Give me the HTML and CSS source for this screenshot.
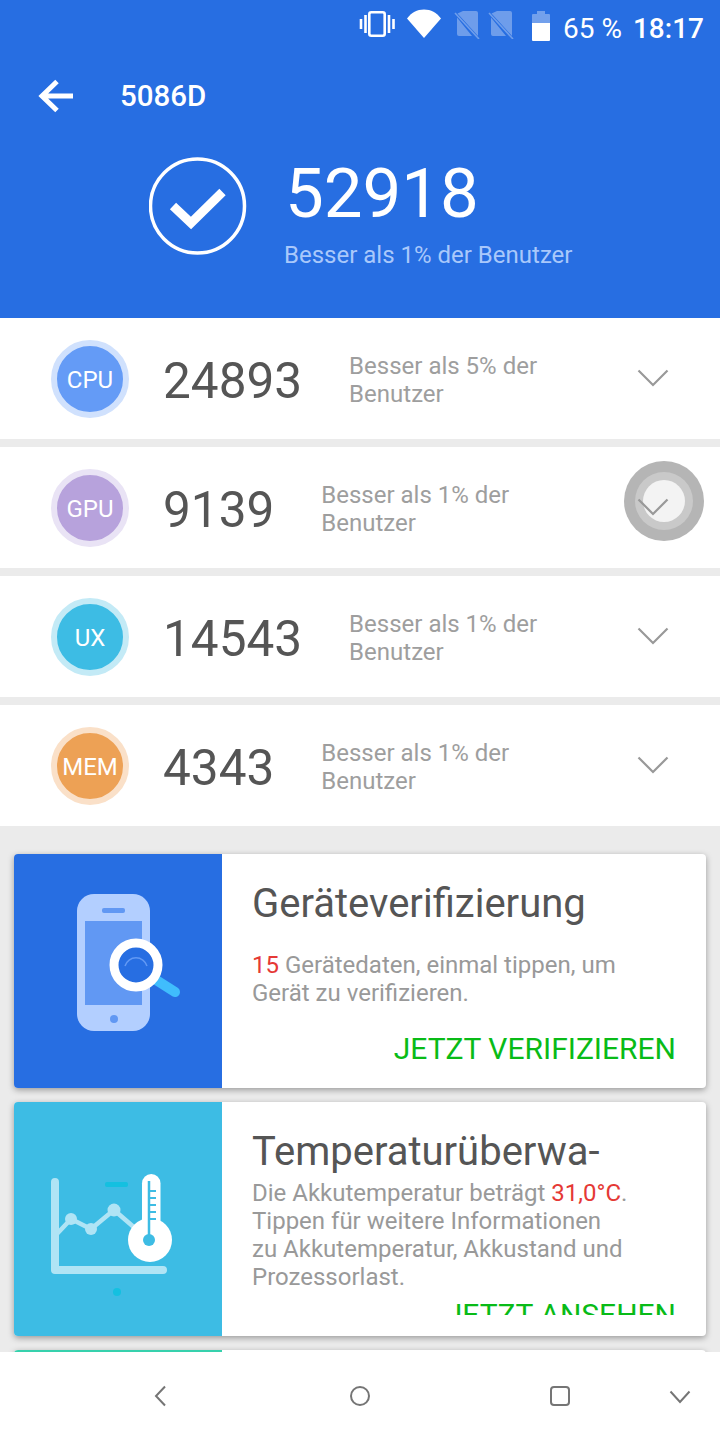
FILE: index.html
```html
<!DOCTYPE html>
<html lang="de">
<head>
    <meta charset="UTF-8">
    <meta name="viewport" content="width=device-width, initial-scale=1.0">
    <title>5086D</title>
    <link rel="stylesheet" href="styles.css">
</head>
<body>
    <div class="screen">
        <header class="header">
            <div class="status-bar">
                <svg class="status-icon" width="38" height="30" viewBox="0 0 38 30">
                    <rect x="11.300" y="3.300" width="15.400" height="23.400" rx="2" fill="none" stroke="#fff" stroke-width="2.600"/>
                    <path d="M7.500 6v18M3 10v10M31 6v18M35.500 10v10" stroke="#fff" stroke-width="2.600" fill="none"/>
                </svg>
                <svg class="status-icon wifi" width="36" height="30" viewBox="0 0 36 30">
                    <path d="M18 29 1 9.500C5.500 3.500 11 .5 18 .5s12.500 3 17 9z" fill="#fff"/>
                </svg>
                <svg class="status-icon sim" width="26" height="30" viewBox="0 0 26 30">
                    <path d="M9 2h13a2 2 0 0 1 2 2v23L3.500 4.500zM3 8.500 18 27H5a2 2 0 0 1-2-2z" fill="#fff" opacity=".33"/>
                    <path d="M1 4 25 30" stroke="#fff" stroke-width="1.600" opacity=".33"/>
                </svg>
                <svg class="status-icon sim" width="26" height="30" viewBox="0 0 26 30">
                    <path d="M9 2h13a2 2 0 0 1 2 2v23L3.500 4.500zM3 8.500 18 27H5a2 2 0 0 1-2-2z" fill="#fff" opacity=".33"/>
                    <path d="M1 4 25 30" stroke="#fff" stroke-width="1.600" opacity=".33"/>
                </svg>
                <svg class="status-icon battery" width="20" height="30" viewBox="0 0 20 30">
                    <path d="M6 0h8v3h4a1 1 0 0 1 1 1v9H1V4a1 1 0 0 1 1-1h4z" fill="#fff" opacity=".35"/>
                    <path d="M1 12h18v17a1 1 0 0 1-1 1H2a1 1 0 0 1-1-1z" fill="#fff"/>
                </svg>
                <span class="battery-text">65 %</span>
                <span class="clock">18:17</span>
            </div>
            <div class="title-bar">
                <svg class="back-arrow" width="36" height="34" viewBox="0 0 36 34">
                    <path d="M35 17H5M19 2.500 4 17l15 14.500" fill="none" stroke="#fff" stroke-width="5"/>
                </svg>
                <span class="device-name">5086D</span>
            </div>
            <div class="total">
                <svg class="total-check" width="98" height="98" viewBox="0 0 98 98">
                    <circle cx="48.500" cy="49" r="47" fill="none" stroke="#fff" stroke-width="3.500"/>
                    <path d="M24 49 42 66 73.500 35" fill="none" stroke="#fff" stroke-width="9"/>
                </svg>
                <div class="total-text">
                    <div class="total-score">52918</div>
                    <div class="total-rank">Besser als 1% der Benutzer</div>
                </div>
            </div>
        </header>

        <main class="content">
            <section class="scores">
                <div class="score-row">
                    <div class="badge cpu"><span>CPU</span></div>
                    <div class="score">24893</div>
                    <div class="rank">Besser als 5% der<br>Benutzer</div>
                    <svg class="chevron" width="32" height="18" viewBox="0 0 32 18"><path d="M1.500 1.500 16 16 30.500 1.500" fill="none" stroke="#999" stroke-width="2.200"/></svg>
                </div>
                <div class="score-row">
                    <div class="badge gpu"><span>GPU</span></div>
                    <div class="score">9139</div>
                    <div class="rank">Besser als 1% der<br>Benutzer</div>
                    <div class="touch-ripple"><div class="touch-mid"><div class="touch-core"></div></div></div>
                    <svg class="chevron" width="32" height="18" viewBox="0 0 32 18"><path d="M1.500 1.500 16 16 30.500 1.500" fill="none" stroke="#999" stroke-width="2.200"/></svg>
                </div>
                <div class="score-row">
                    <div class="badge ux"><span>UX</span></div>
                    <div class="score">14543</div>
                    <div class="rank">Besser als 1% der<br>Benutzer</div>
                    <svg class="chevron" width="32" height="18" viewBox="0 0 32 18"><path d="M1.500 1.500 16 16 30.500 1.500" fill="none" stroke="#999" stroke-width="2.200"/></svg>
                </div>
                <div class="score-row">
                    <div class="badge mem"><span>MEM</span></div>
                    <div class="score">4343</div>
                    <div class="rank">Besser als 1% der<br>Benutzer</div>
                    <svg class="chevron" width="32" height="18" viewBox="0 0 32 18"><path d="M1.500 1.500 16 16 30.500 1.500" fill="none" stroke="#999" stroke-width="2.200"/></svg>
                </div>
            </section>

            <section class="cards">
                <article class="card">
                    <div class="card-art blue">
                        <svg class="art-phone" width="110" height="140" viewBox="0 0 110 140">
                            <rect x="2" y="1" width="73" height="137" rx="17" fill="#b3cfff"/>
                            <rect x="10" y="28" width="57" height="84" fill="#6198f3"/>
                            <rect x="27" y="15" width="23" height="5" rx="2" fill="#6198f3"/>
                            <circle cx="39" cy="126" r="4" fill="#6198f3"/>
                            <path d="M78 85 100 99" stroke="#40bdfd" stroke-width="10" stroke-linecap="round"/>
                            <circle cx="61" cy="72" r="22" fill="#276ee2" stroke="#fff" stroke-width="9"/>
                            <path d="M50 73a11.500 11.500 0 0 1 22 0" fill="none" stroke="#6198f3" stroke-width="1.500"/>
                        </svg>
                    </div>
                    <div class="card-body">
                        <h2 class="card-title">Geräteverifizierung</h2>
                        <p class="card-text first"><span class="red">15</span> Gerätedaten, einmal tippen, um<br>Gerät zu verifizieren.</p>
                        <div class="card-action">JETZT VERIFIZIEREN</div>
                    </div>
                </article>
                <article class="card">
                    <div class="card-art cyan">
                        <svg class="art-thermo" width="124" height="126" viewBox="0 0 124 126">
                            <path d="M5 9v88h108" fill="none" stroke="#b0e4f5" stroke-width="8" stroke-linecap="round" stroke-linejoin="round"/>
                            <path d="M5 63 21 46l20 10 23-19 22 19" fill="none" stroke="#b0e4f5" stroke-width="4.500"/>
                            <circle cx="21" cy="46" r="6" fill="#b0e4f5"/>
                            <circle cx="41" cy="56" r="6" fill="#b0e4f5"/>
                            <circle cx="64" cy="37" r="6.500" fill="#b0e4f5"/>
                            <rect x="55" y="9" width="23" height="5" rx="2" fill="#14c0e0"/>
                            <circle cx="67" cy="119" r="4" fill="#14c0e0"/>
                            <rect x="92" y="1" width="18.500" height="60" rx="9.250" fill="#fff"/>
                            <circle cx="100" cy="67" r="22" fill="#fff"/>
                            <path d="M99 8v59" stroke="#3dbce4" stroke-width="2.500"/>
                            <path d="M99 18h7M99 25h7M99 32h7M99 39h7M99 46h7" stroke="#3dbce4" stroke-width="2"/>
                            <circle cx="99" cy="67" r="6" fill="#3dbce4"/>
                        </svg>
                    </div>
                    <div class="card-body">
                        <h2 class="card-title">Temperaturüberwa-</h2>
                        <p class="card-text">Die Akkutemperatur beträgt <span class="red">31,0°C</span>.<br>Tippen für weitere Informationen<br>zu Akkutemperatur, Akkustand und<br>Prozessorlast.</p>
                        <div class="card-action clipped">JETZT ANSEHEN</div>
                    </div>
                </article>
                <article class="card">
                    <div class="card-art green"></div>
                    <div class="card-body"></div>
                </article>
            </section>
        </main>

        <nav class="nav-bar">
            <svg class="nav-back" width="14" height="22" viewBox="0 0 14 22"><path d="M12 1.500 3 11l9 9.500" fill="none" stroke="#757575" stroke-width="2"/></svg>
            <svg class="nav-home" width="22" height="22" viewBox="0 0 22 22"><circle cx="11" cy="11" r="9" fill="none" stroke="#757575" stroke-width="2"/></svg>
            <svg class="nav-recent" width="22" height="22" viewBox="0 0 22 22"><rect x="2" y="2" width="18" height="18" rx="3" fill="none" stroke="#757575" stroke-width="2"/></svg>
            <svg class="nav-hide" width="22" height="14" viewBox="0 0 22 14"><path d="M1.500 1.500 11 12l9.500-10.500" fill="none" stroke="#757575" stroke-width="2"/></svg>
        </nav>
    </div>
</body>
</html>
```

FILE: styles.css
```css
* {
    box-sizing: border-box;
}

body {
    margin: 0;
    background: #ebebeb;
    font-family: Roboto, "Liberation Sans", sans-serif;
}

.screen {
    width: 720px;
    height: 1440px;
    display: flex;
    flex-direction: column;
    overflow: hidden;
}

/* header */
.header {
    height: 318px;
    flex: none;
    background: #276ee2;
    color: #fff;
}

.status-bar {
    height: 50px;
    padding: 9px 16px 0 0;
    display: flex;
    align-items: flex-start;
    justify-content: flex-end;
}

.status-icon {
    display: block;
    margin-right: 10px;
}

.status-icon.wifi {
    margin-right: 12px;
}

.status-icon.sim {
    margin-right: 8px;
}

.status-icon.battery {
    margin: 2px 12px 0 9px;
}

.battery-text {
    font-size: 28px;
    line-height: 40px;
    margin-right: 11px;
}

.clock {
    font-size: 28px;
    line-height: 40px;
    font-weight: 500;
}

.title-bar {
    height: 92px;
    padding-left: 38px;
    display: flex;
    align-items: center;
}

.back-arrow {
    display: block;
}

.device-name {
    margin-left: 46px;
    font-size: 29.500px;
    font-weight: 500;
}

.total {
    padding: 4px 0 0 149px;
    display: flex;
}

.total-check {
    display: block;
    margin-top: 11px;
}

.total-text {
    margin-left: 37px;
}

.total-score {
    font-size: 69px;
    line-height: 90px;
    margin-top: 3px;
    padding-left: 1px;
}

.total-rank {
    margin-top: 1px;
    font-size: 24px;
    line-height: 30px;
    color: #a9c8fb;
}

/* score rows */
.content {
    flex: 1;
    min-height: 0;
    overflow: hidden;
}

.scores {
    display: flex;
    flex-direction: column;
    gap: 8px;
}

.score-row {
    position: relative;
    height: 121px;
    background: #fff;
    display: flex;
    align-items: center;
    padding-left: 51px;
}

.badge {
    width: 78px;
    height: 78px;
    border-radius: 50%;
    border: 6px solid;
    padding-top: 2px;
    flex: none;
    display: flex;
    align-items: center;
    justify-content: center;
    color: #fff;
    font-size: 24px;
}

.badge.cpu {
    background: #649bf6;
    border-color: #d0e1fd;
}

.badge.gpu {
    background: #b7a2dc;
    border-color: #e9e3f5;
}

.badge.ux {
    background: #3dbce4;
    border-color: #c3eaf6;
}

.badge.mem {
    background: #eda155;
    border-color: #fae0c8;
}

.score {
    margin: 4px 0 0 34px;
    font-size: 49.500px;
    color: #555;
}

.rank {
    margin: 2px 0 0 47px;
    font-size: 24px;
    line-height: 28px;
    color: #9e9e9e;
}

.chevron {
    position: absolute;
    left: 637px;
    top: 51px;
}

.touch-ripple {
    position: absolute;
    left: 624px;
    top: 14px;
    width: 80px;
    height: 80px;
    border-radius: 50%;
    background: #b5b5b5;
    display: flex;
    align-items: center;
    justify-content: center;
}

.touch-mid {
    width: 58px;
    height: 58px;
    border-radius: 50%;
    background: #c9c9c9;
    display: flex;
    align-items: center;
    justify-content: center;
}

.touch-core {
    width: 42px;
    height: 42px;
    border-radius: 50%;
    background: #f3f3f3;
}

/* cards */
.cards {
    padding: 28px 14px 0;
    display: flex;
    flex-direction: column;
    gap: 14px;
}

.card {
    height: 234px;
    flex: none;
    display: flex;
    background: #fff;
    border-radius: 4px;
    overflow: hidden;
    box-shadow: 0 2px 6px rgba(0, 0, 0, 0.35);
}

.card-art {
    width: 208px;
    flex: none;
    display: flex;
    align-items: center;
    justify-content: center;
}

.card-art.blue {
    background: #276ee2;
}

.card-art.cyan {
    background: #3dbce4;
}

.card-art.green {
    background: #36d1ad;
}

.art-phone {
    margin: 0 0 16px 24px;
}

.art-thermo {
    margin: 34px 12px 0 0;
}

.card-body {
    flex: 1;
    min-width: 0;
    height: 213px;
    padding: 23px 30px 0 30px;
    overflow: hidden;
}

.card-title {
    margin: 0;
    font-size: 40px;
    line-height: 54px;
    font-weight: 400;
    color: #555;
}

.card-text {
    margin: 0;
    font-size: 24px;
    line-height: 28px;
    color: #999;
}

.card-text.first {
    margin-top: 20px;
}

.red {
    color: #e53935;
}

.card-action {
    margin-top: 22px;
    font-size: 30px;
    line-height: 40px;
    color: #09bb17;
    text-align: right;
}

.card-action.clipped {
    margin-top: 4px;
}

/* nav */
.nav-bar {
    position: relative;
    height: 88px;
    flex: none;
    background: #fff;
}

.nav-bar svg {
    position: absolute;
    top: 33px;
}

.nav-back {
    left: 153px;
}

.nav-home {
    left: 349px;
}

.nav-recent {
    left: 549px;
}

.nav-bar .nav-hide {
    left: 669px;
    top: 38px;
}
```
